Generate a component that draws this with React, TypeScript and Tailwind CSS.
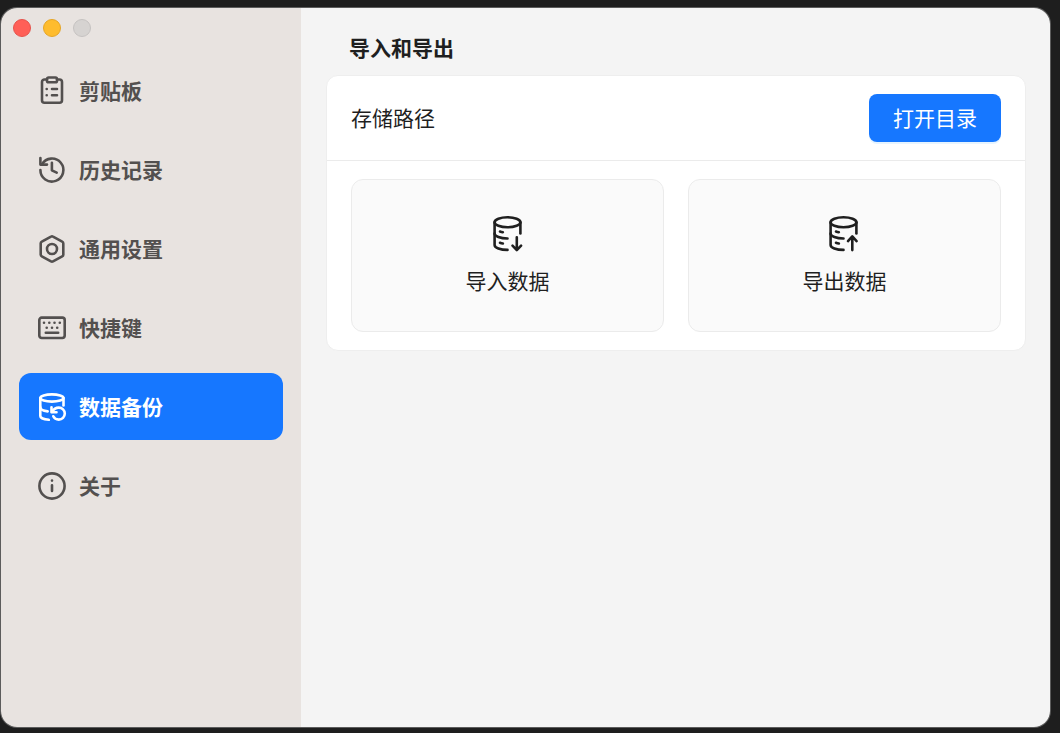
import type { ReactNode } from "react";

type IconProps = { children: ReactNode };

function NavIcon({ children }: IconProps) {
  return (
    <svg
      viewBox="0 0 30 30"
      className="size-[30px] shrink-0"
      fill="none"
      stroke="currentColor"
      strokeWidth="2.6"
      strokeLinecap="round"
      strokeLinejoin="round"
      aria-hidden="true"
    >
      {children}
    </svg>
  );
}

function DatabaseIcon({ children }: IconProps) {
  return (
    <svg
      viewBox="0 0 36 36"
      className="size-9"
      fill="none"
      stroke="currentColor"
      strokeWidth="2.6"
      strokeLinecap="round"
      strokeLinejoin="round"
      aria-hidden="true"
    >
      {children}
    </svg>
  );
}

// the cylinder shared by the import and export icons
const cylinder = (
  <>
    <ellipse cx="17.5" cy="6.3" rx="12.9" ry="5" />
    <path d="M4.6 6.3v22.6c0 2.8 5.8 5 12.9 5" />
    <path d="M30.4 6.3v11.2" />
    <path d="M4.6 17.5c0 2.8 5.8 5 12.9 5" />
    <path d="M10 15.5q1.300 .5 2.900 .7M10 26.800q1.300 .5 2.900 .7" />
  </>
);

const navItems = [
  {
    label: "剪贴板",
    icon: (
      <>
        <path d="M10 3.500H7.500A2.500 2.500 0 0 0 5 6v18.200a2.500 2.500 0 0 0 2.500 2.500h15a2.500 2.500 0 0 0 2.500-2.500V6a2.500 2.500 0 0 0-2.500-2.500H20" />
        <rect x="10" y="1.500" width="10" height="4.800" rx="1.600" />
        <path d="M9.700 13h.02M9.700 19.200h.02M15 13h5M15 19.200h5" />
      </>
    ),
  },
  {
    label: "历史记录",
    icon: (
      <>
        <path d="M3.400 15A11.500 11.500 0 1 0 5 9.200" />
        <path d="M3.400 3v6.600H10" />
        <path d="M14.900 7.800v7.500l4.800 2.400" />
      </>
    ),
  },
  {
    label: "通用设置",
    icon: (
      <>
        <path d="M14 2.600a2 2 0 0 1 2 0l9.200 5a2 2 0 0 1 1.100 1.800v11.200a2 2 0 0 1-1.100 1.800l-9.200 5a2 2 0 0 1-2 0l-9.200-5a2 2 0 0 1-1.100-1.800V9.400a2 2 0 0 1 1.100-1.800z" />
        <circle cx="15" cy="15" r="5" />
      </>
    ),
  },
  {
    label: "快捷键",
    icon: (
      <>
        <rect x="2.300" y="4.600" width="25.400" height="20.400" rx="2.400" />
        <path d="M7 9.800h.02M12.300 9.800h.02M17.500 9.800h.02M22.800 9.800h.02M9.700 14.700h.02M15 14.700h.02M20.200 14.700h.02M8.800 19.800h12.400" />
      </>
    ),
  },
  {
    label: "数据备份",
    active: true,
    icon: (
      <>
        <ellipse cx="14.900" cy="6" rx="11.600" ry="3.600" />
        <path d="M3.300 6v18c0 1.900 3.500 3.500 8.500 3.800" />
        <path d="M26.500 6v7.500" />
        <path d="M3.300 15.300c0 2 2.900 3.600 7.400 4.100" />
        <path d="M14.500 15.200v5h5" />
        <path d="M15 19.800c1.500-2.600 4-4.200 6.800-4.200a6 6 0 0 1 0 12c-2.500 0-4.600-1.300-5.500-3.300" />
      </>
    ),
  },
  {
    label: "关于",
    icon: (
      <>
        <circle cx="15" cy="15" r="12.600" />
        <path d="M15 9.600h.02M15 14.300v5.600" />
      </>
    ),
  },
];

function Sidebar() {
  return (
    <aside className="flex w-[300px] shrink-0 flex-col bg-[#e8e3e0] px-[18px]">
      <div className="-ml-1.5 flex gap-3 pt-[11px]">
        <button
          type="button"
          aria-label="关闭"
          className="size-[18px] rounded-full border border-[#e5534c] bg-[#ff5f57]"
        />
        <button
          type="button"
          aria-label="最小化"
          className="size-[18px] rounded-full border border-[#e5a526] bg-[#febc2e]"
        />
        <button
          type="button"
          aria-label="缩放"
          disabled
          className="size-[18px] rounded-full border border-[#c5c2c0] bg-[#d6d3d1]"
        />
      </div>
      <nav className="mt-5 flex flex-col gap-3">
        {navItems.map((item) => (
          <button
            key={item.label}
            type="button"
            aria-current={item.active ? "page" : undefined}
            className={
              item.active
                ? "flex h-[67px] items-center gap-3 rounded-xl bg-[#1677ff] px-[18px] text-[21px] font-bold text-white"
                : "flex h-[67px] items-center gap-3 rounded-xl px-[18px] text-[21px] font-bold text-[#53504f]"
            }
          >
            <NavIcon>{item.icon}</NavIcon>
            {item.label}
          </button>
        ))}
      </nav>
    </aside>
  );
}

function BackupPanel() {
  return (
    <main className="min-w-0 flex-1 bg-[#f4f4f4] pt-[23px] pr-6 pl-[25px]">
      <h1 className="pl-[23px] text-[21px] leading-8 font-bold">导入和导出</h1>
      <section className="mt-3 rounded-xl border border-[#eeeeee] bg-white">
        <div className="flex items-center justify-between border-b border-[#ebebeb] px-6 py-[18px]">
          <span className="text-[21px]">存储路径</span>
          <button
            type="button"
            className="h-12 rounded-lg bg-[#1677ff] px-6 text-[21px] text-white shadow-[0_2px_0_rgba(5,145,255,0.1)]"
          >
            打开目录
          </button>
        </div>
        <div className="grid grid-cols-2 gap-6 px-6 py-[18px]">
          <button
            type="button"
            className="flex h-[153px] flex-col items-center justify-center gap-3 rounded-xl border border-[#ebebeb] bg-[#fafafa] text-[21px] leading-8"
          >
            <DatabaseIcon>
              {cylinder}
              <path d="M26.800 21.200v12.500M22.500 29.700l4.300 4.400 4.300-4.400" />
            </DatabaseIcon>
            导入数据
          </button>
          <button
            type="button"
            className="flex h-[153px] flex-col items-center justify-center gap-3 rounded-xl border border-[#ebebeb] bg-[#fafafa] text-[21px] leading-8"
          >
            <DatabaseIcon>
              <g transform="translate(-1 0)">
                {cylinder}
                <path d="M26.300 34.100V20.700M22 25.100l4.300-4.700 4.300 4.700" />
              </g>
            </DatabaseIcon>
            导出数据
          </button>
        </div>
      </section>
    </main>
  );
}

export default function App() {
  return (
    <div className="flex min-h-screen bg-[#1e1e1e] pt-2 pr-2.5 pb-1.5 pl-px font-['Noto_Sans_CJK_SC',sans-serif] text-[#1f1f1f]">
      <div className="flex flex-1 overflow-hidden rounded-2xl ring-1 ring-[#5c5c5c]">
        <Sidebar />
        <BackupPanel />
      </div>
    </div>
  );
}
